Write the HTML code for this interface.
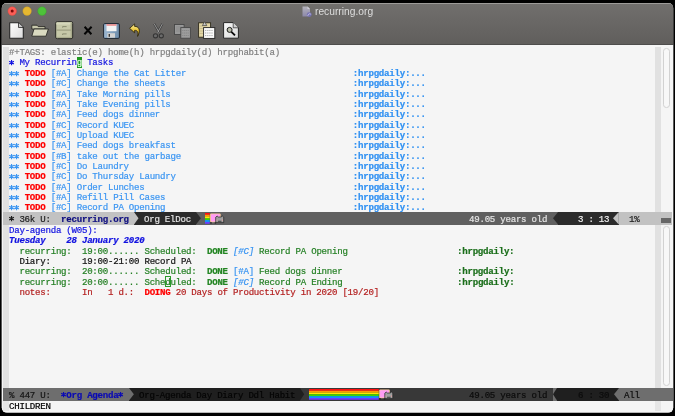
<!DOCTYPE html>
<html><head><meta charset="utf-8">
<style>
html,body{margin:0;padding:0;}
body{width:675px;height:416px;background:#000;position:relative;overflow:hidden;font-family:"Liberation Mono",monospace;}
.win{position:absolute;left:0;top:0;width:675px;height:416px;clip-path:inset(3px 1.8px 3.4px 1.8px round 5px);background:#f5f5f5;}
.tb{position:absolute;left:0;top:3px;width:675px;height:42px;background:linear-gradient(#716f6d,#605e5c);}
.tbhl{position:absolute;left:0;top:3px;width:675px;height:1px;background:#9d9b99;}
.tbln{position:absolute;left:0;top:44.2px;width:675px;height:1px;background:#4e4d4c;}
.tl{position:absolute;top:6.7px;width:8.8px;height:8.8px;border-radius:50%;box-sizing:border-box;}
.title{position:absolute;will-change:transform;top:4.6px;left:314.6px;font-family:"Liberation Sans",sans-serif;font-size:10.25px;line-height:13px;color:#dedede;}
.ic{position:absolute;overflow:visible;}
.L{position:absolute;white-space:pre;will-change:transform;font-size:9.100px;letter-spacing:-0.248px;-webkit-text-stroke-width:0.2px;line-height:10.35px;height:10.35px;}
.fr{position:absolute;background:#e1e1e1;}
.ml{position:absolute;height:12.5px;overflow:hidden;}
.mt{position:absolute;white-space:pre;will-change:transform;margin-top:1.6px;font-size:9.100px;letter-spacing:-0.248px;-webkit-text-stroke-width:0.2px;line-height:12.5px;top:0;}
.g{color:#808080}.bl{color:#1212e0}.bli{color:#1212e0;font-weight:bold;font-style:italic}
.lb{color:#3a95f2}.rd{color:#ff0000;font-weight:bold}.tg{color:#2f90f2;font-weight:bold}
.tga{color:#1a6e1a;font-weight:bold}.gr{color:#237f23}.grb{color:#228522;font-weight:bold}.dk{color:#111}.nt{color:#b42222}
.lbi{color:#3a95f2;font-style:italic}.lbb{color:#2f90f2;font-weight:bold}
.astsvg{vertical-align:top;overflow:visible}
.cur{background:#1f9a1f;color:#e8ffe8}
.hc{color:#1e7e1e}
</style></head><body>
<div class="win">
 <div class="tb"></div>
 <div class="tbhl"></div>
 <div class="tbln"></div>
 <svg class="ic" style="left:0;top:0" width="60" height="20" viewBox="0 0 60 20">
  <circle cx="12.2" cy="11.1" r="4.3" fill="#fc5f57" stroke="#e0443c" stroke-width="0.4"/>
  <circle cx="12.2" cy="11.1" r="1.5" fill="#7c0a0a"/>
  <circle cx="27.1" cy="11.1" r="4.3" fill="#e5b731" stroke="#d09e20" stroke-width="0.4"/>
  <circle cx="42.0" cy="11.1" r="4.3" fill="#4ec23a" stroke="#3aa52a" stroke-width="0.4"/>
 </svg>
 <!-- title icon -->
 <svg class="ic" style="left:301.5px;top:5.5px" width="11" height="12" viewBox="0 0 11 12">
  <defs><linearGradient id="gdoc" x1="0" y1="0" x2="0" y2="1"><stop offset="0" stop-color="#b4b2bc"/><stop offset="1" stop-color="#8c88a8"/></linearGradient></defs>
  <path d="M0.5 0.5 H5.5 L8 3 V10.5 H0.5 Z" fill="url(#gdoc)"/>
  <path d="M5.5 0.5 V3 H8" fill="#d0ced8"/>
  <circle cx="7.3" cy="8.6" r="2.4" fill="#7470b0"/>
  <path d="M5.8 9.8 C6.4 7.6 7.8 7.4 8.8 8.2" stroke="#d8d6f0" stroke-width="0.8" fill="none"/>
 </svg>
 <div class="title">recurring.org</div>

 <!-- toolbar icons -->
 <!-- new -->
 <svg class="ic" style="left:9px;top:22px" width="15" height="17" viewBox="0 0 15 17">
  <defs><linearGradient id="gnew" x1="0" y1="0" x2="1" y2="1"><stop offset="0" stop-color="#ffffff"/><stop offset="1" stop-color="#dcdcdc"/></linearGradient></defs>
  <path d="M0.7 0.7 H9.5 L14.3 5.5 V16.3 H0.7 Z" fill="url(#gnew)" stroke="#262626" stroke-width="1.1" stroke-linejoin="round"/>
  <path d="M9.5 0.7 V5.5 H14.3" fill="#c8c8c8" stroke="#262626" stroke-width="0.8"/>
 </svg>
 <!-- open -->
 <svg class="ic" style="left:31px;top:24px" width="18" height="13" viewBox="0 0 18 13">
  <path d="M0.8 1.2 H6 L7.2 2.6 H14 V5 H0.8 Z" fill="#c9c9ad" stroke="#2a2a26" stroke-width="0.9"/>
  <path d="M0.8 12.2 L3 5 H17.4 L15 12.2 Z" fill="#dadac0" stroke="#2a2a26" stroke-width="0.9" stroke-linejoin="round"/>
 </svg>
 <!-- cabinet -->
 <svg class="ic" style="left:55px;top:21px" width="18.5" height="18.5" viewBox="0 0 18.5 18.5">
  <rect x="0.7" y="0.7" width="17" height="17" rx="1.6" fill="#c6c8a8" stroke="#282824" stroke-width="1"/>
  <rect x="1.4" y="1.4" width="15.6" height="2.2" fill="#d6d8bc"/>
  <rect x="15.6" y="1.4" width="1.4" height="15.6" fill="#a8aa8c"/>
  <path d="M1.6 9.1 H15.8" stroke="#8e9074" stroke-width="0.9"/>
  <path d="M1.6 16.4 H15.8" stroke="#9a9c80" stroke-width="0.7"/>
  <path d="M7.6 6.6 V5.6 H11.6 M7.6 13.9 V12.9 H11.6" fill="none" stroke="#7a7c62" stroke-width="0.8"/>
 </svg>
 <!-- close X -->
 <svg class="ic" style="left:82.5px;top:25.6px" width="10" height="9" viewBox="0 0 10 9">
  <path d="M1.6 0.8 L8.4 8.2 M8.6 0.8 L1.4 8.2" stroke="#050505" stroke-width="2" stroke-linecap="butt"/>
 </svg>
 <!-- save -->
 <svg class="ic" style="left:103px;top:22.7px" width="17" height="16" viewBox="0 0 17 16">
  <defs><linearGradient id="gsave" x1="0" y1="0" x2="1" y2="0"><stop offset="0" stop-color="#9db8d2"/><stop offset="1" stop-color="#6d8cab"/></linearGradient></defs>
  <rect x="0.6" y="0.6" width="15.8" height="14.8" rx="1.2" fill="url(#gsave)" stroke="#1e2530" stroke-width="1"/>
  <rect x="3.5" y="1.2" width="10" height="7" fill="#f4f4f4"/>
  <rect x="3.5" y="1.2" width="10" height="1.5" fill="#e88080"/>
  <rect x="4.3" y="10.2" width="7.7" height="4.5" fill="#d4d4d4"/>
  <rect x="5.6" y="11" width="1.4" height="2.8" fill="#3a3a3a"/>
 </svg>
 <!-- undo -->
 <svg class="ic" style="left:128px;top:22px" width="14" height="16" viewBox="0 0 14 16">
  <defs><linearGradient id="gundo" x1="0" y1="0" x2="0" y2="1"><stop offset="0" stop-color="#fbeea0"/><stop offset="0.55" stop-color="#e6c030"/><stop offset="1" stop-color="#c09418"/></linearGradient></defs>
  <path d="M1.6 6.3 L6.6 1.9 V4.4 C10.6 4.2 13.2 7.6 9.6 14.4 C10.4 9.6 9.4 8.2 6.6 8.4 V10.8 Z" fill="url(#gundo)" stroke="#2a2208" stroke-width="0.8" stroke-linejoin="round"/>
 </svg>
 <!-- cut (disabled) -->
 <svg class="ic" style="left:152px;top:22.5px" width="13" height="16" viewBox="0 0 13 16">
  <path d="M2.2 0.8 L7.2 9.6 M10.4 0.8 L5.6 9.6" stroke="#3c3c3c" stroke-width="2.2"/>
  <path d="M2.2 0.8 L7.2 9.6 M10.4 0.8 L5.6 9.6" stroke="#a0a0a0" stroke-width="0.9"/>
  <circle cx="3.5" cy="12.8" r="2.1" fill="#6a6a6a" stroke="#353535" stroke-width="1.1"/>
  <circle cx="9.3" cy="12.8" r="2.1" fill="#6a6a6a" stroke="#353535" stroke-width="1.1"/>
 </svg>
 <!-- copy (disabled) -->
 <svg class="ic" style="left:174px;top:23.8px" width="17" height="15" viewBox="0 0 17 15">
  <rect x="0.5" y="0.5" width="9.6" height="10" fill="#999999" stroke="#474747" stroke-width="0.9"/>
  <path d="M2 3 H9 M2 5 H9 M2 7 H9" stroke="#858585" stroke-width="0.6"/>
  <rect x="6.8" y="3.6" width="9.6" height="10.6" fill="#9d9d9d" stroke="#474747" stroke-width="0.9"/>
  <path d="M8.2 6.5 H15 M8.2 9 H15 M8.2 11.5 H15" stroke="#808080" stroke-width="0.7" stroke-dasharray="1.2 0.6"/>
 </svg>
 <!-- paste -->
 <svg class="ic" style="left:198px;top:21px" width="17.5" height="18" viewBox="0 0 17.5 18">
  <rect x="0.6" y="1.8" width="12" height="14.4" fill="#e2d6a6" stroke="#2e2a1a" stroke-width="0.9"/>
  <path d="M1.6 5 H5 M1.6 7.5 H5 M1.6 10 H5 M1.6 12.5 H5" stroke="#b8ac7c" stroke-width="0.6"/>
  <path d="M4.4 4.6 L6.6 0.6 L8.8 4.6 Z" fill="#c8c8c8" stroke="#3a3a3a" stroke-width="0.7"/>
  <rect x="5.6" y="6.6" width="11.2" height="10.8" fill="#fbfbfb" stroke="#222" stroke-width="0.9"/>
  <path d="M7 9.4 H15.4 M7 12 H15.4 M7 14.6 H15.4" stroke="#7a7a7a" stroke-width="0.6" stroke-dasharray="1.4 0.7"/>
 </svg>
 <!-- search -->
 <svg class="ic" style="left:222.8px;top:22px" width="16" height="17" viewBox="0 0 16 17">
  <defs><linearGradient id="gsr" x1="0" y1="0" x2="1" y2="1"><stop offset="0" stop-color="#fafafa"/><stop offset="1" stop-color="#dadada"/></linearGradient></defs>
  <path d="M0.6 0.6 H10.2 L15.4 5.8 V16.2 H0.6 Z" fill="url(#gsr)" stroke="#262626" stroke-width="1" stroke-linejoin="round"/>
  <path d="M10.2 0.6 V5.8 H15.4" fill="#cfcfcf" stroke="#262626" stroke-width="0.7"/>
  <circle cx="6.6" cy="7.9" r="2.5" fill="#b9bcaa" stroke="#1a1a1a" stroke-width="1"/>
  <path d="M8.4 9.8 L12 13.4" stroke="#0a0a0a" stroke-width="1.8"/>
 </svg>

 <!-- content internal area -->
 <div style="position:absolute;left:0;top:45px;width:675px;height:371px;background:#f5f5f5"></div>

 <!-- fringes top window -->
 <div class="fr" style="left:3.1px;top:47px;width:6px;height:165.3px"></div>
 <div class="fr" style="left:654.6px;top:47px;width:6px;height:165.3px"></div>
 <!-- scrollbar top -->
 <div style="position:absolute;left:663px;top:47.8px;width:6.6px;height:60.5px;border:0.8px solid #d2d2d2;border-radius:3.3px;box-sizing:border-box;background:#f8f8f8"></div>

<div class="L" style="top:48.10px;left:9.10px"><span class="g">#+TAGS: elastic(e) home(h) hrpgdaily(d) hrpghabit(a)</span></div>
<div class="L" style="top:58.45px;left:9.10px"><svg class="astsvg bl" width="5.212" height="10" viewBox="0 0 5.2 10"><path d="M2.55 1.9 V7.3 M0.2 3.25 L4.9 5.95 M0.2 5.95 L4.9 3.25" stroke="currentColor" stroke-width="1.15"/></svg><span class="bl"> My Recurrin</span><span class="cur">g</span><span class="bl"> Tasks</span></div>
<div class="L" style="top:68.80px;left:9.10px"><svg class="astsvg lb" width="5.212" height="10" viewBox="0 0 5.2 10"><path d="M2.55 1.9 V7.3 M0.2 3.25 L4.9 5.95 M0.2 5.95 L4.9 3.25" stroke="currentColor" stroke-width="1.15"/></svg><svg class="astsvg lb" width="5.212" height="10" viewBox="0 0 5.2 10"><path d="M2.55 1.9 V7.3 M0.2 3.25 L4.9 5.95 M0.2 5.95 L4.9 3.25" stroke="currentColor" stroke-width="1.15"/></svg> <span class="rd">TODO</span> <span class="lb">[#A] Change the Cat Litter                                </span><span class="tg">:hrpgdaily:...</span></div>
<div class="L" style="top:79.15px;left:9.10px"><svg class="astsvg lb" width="5.212" height="10" viewBox="0 0 5.2 10"><path d="M2.55 1.9 V7.3 M0.2 3.25 L4.9 5.95 M0.2 5.95 L4.9 3.25" stroke="currentColor" stroke-width="1.15"/></svg><svg class="astsvg lb" width="5.212" height="10" viewBox="0 0 5.2 10"><path d="M2.55 1.9 V7.3 M0.2 3.25 L4.9 5.95 M0.2 5.95 L4.9 3.25" stroke="currentColor" stroke-width="1.15"/></svg> <span class="rd">TODO</span> <span class="lb">[#C] Change the sheets                                    </span><span class="tg">:hrpgdaily:...</span></div>
<div class="L" style="top:89.50px;left:9.10px"><svg class="astsvg lb" width="5.212" height="10" viewBox="0 0 5.2 10"><path d="M2.55 1.9 V7.3 M0.2 3.25 L4.9 5.95 M0.2 5.95 L4.9 3.25" stroke="currentColor" stroke-width="1.15"/></svg><svg class="astsvg lb" width="5.212" height="10" viewBox="0 0 5.2 10"><path d="M2.55 1.9 V7.3 M0.2 3.25 L4.9 5.95 M0.2 5.95 L4.9 3.25" stroke="currentColor" stroke-width="1.15"/></svg> <span class="rd">TODO</span> <span class="lb">[#A] Take Morning pills                                   </span><span class="tg">:hrpgdaily:...</span></div>
<div class="L" style="top:99.85px;left:9.10px"><svg class="astsvg lb" width="5.212" height="10" viewBox="0 0 5.2 10"><path d="M2.55 1.9 V7.3 M0.2 3.25 L4.9 5.95 M0.2 5.95 L4.9 3.25" stroke="currentColor" stroke-width="1.15"/></svg><svg class="astsvg lb" width="5.212" height="10" viewBox="0 0 5.2 10"><path d="M2.55 1.9 V7.3 M0.2 3.25 L4.9 5.95 M0.2 5.95 L4.9 3.25" stroke="currentColor" stroke-width="1.15"/></svg> <span class="rd">TODO</span> <span class="lb">[#A] Take Evening pills                                   </span><span class="tg">:hrpgdaily:...</span></div>
<div class="L" style="top:110.20px;left:9.10px"><svg class="astsvg lb" width="5.212" height="10" viewBox="0 0 5.2 10"><path d="M2.55 1.9 V7.3 M0.2 3.25 L4.9 5.95 M0.2 5.95 L4.9 3.25" stroke="currentColor" stroke-width="1.15"/></svg><svg class="astsvg lb" width="5.212" height="10" viewBox="0 0 5.2 10"><path d="M2.55 1.9 V7.3 M0.2 3.25 L4.9 5.95 M0.2 5.95 L4.9 3.25" stroke="currentColor" stroke-width="1.15"/></svg> <span class="rd">TODO</span> <span class="lb">[#A] Feed dogs dinner                                     </span><span class="tg">:hrpgdaily:...</span></div>
<div class="L" style="top:120.55px;left:9.10px"><svg class="astsvg lb" width="5.212" height="10" viewBox="0 0 5.2 10"><path d="M2.55 1.9 V7.3 M0.2 3.25 L4.9 5.95 M0.2 5.95 L4.9 3.25" stroke="currentColor" stroke-width="1.15"/></svg><svg class="astsvg lb" width="5.212" height="10" viewBox="0 0 5.2 10"><path d="M2.55 1.9 V7.3 M0.2 3.25 L4.9 5.95 M0.2 5.95 L4.9 3.25" stroke="currentColor" stroke-width="1.15"/></svg> <span class="rd">TODO</span> <span class="lb">[#C] Record KUEC                                          </span><span class="tg">:hrpgdaily:...</span></div>
<div class="L" style="top:130.90px;left:9.10px"><svg class="astsvg lb" width="5.212" height="10" viewBox="0 0 5.2 10"><path d="M2.55 1.9 V7.3 M0.2 3.25 L4.9 5.95 M0.2 5.95 L4.9 3.25" stroke="currentColor" stroke-width="1.15"/></svg><svg class="astsvg lb" width="5.212" height="10" viewBox="0 0 5.2 10"><path d="M2.55 1.9 V7.3 M0.2 3.25 L4.9 5.95 M0.2 5.95 L4.9 3.25" stroke="currentColor" stroke-width="1.15"/></svg> <span class="rd">TODO</span> <span class="lb">[#C] Upload KUEC                                          </span><span class="tg">:hrpgdaily:...</span></div>
<div class="L" style="top:141.25px;left:9.10px"><svg class="astsvg lb" width="5.212" height="10" viewBox="0 0 5.2 10"><path d="M2.55 1.9 V7.3 M0.2 3.25 L4.9 5.95 M0.2 5.95 L4.9 3.25" stroke="currentColor" stroke-width="1.15"/></svg><svg class="astsvg lb" width="5.212" height="10" viewBox="0 0 5.2 10"><path d="M2.55 1.9 V7.3 M0.2 3.25 L4.9 5.95 M0.2 5.95 L4.9 3.25" stroke="currentColor" stroke-width="1.15"/></svg> <span class="rd">TODO</span> <span class="lb">[#A] Feed dogs breakfast                                  </span><span class="tg">:hrpgdaily:...</span></div>
<div class="L" style="top:151.60px;left:9.10px"><svg class="astsvg lb" width="5.212" height="10" viewBox="0 0 5.2 10"><path d="M2.55 1.9 V7.3 M0.2 3.25 L4.9 5.95 M0.2 5.95 L4.9 3.25" stroke="currentColor" stroke-width="1.15"/></svg><svg class="astsvg lb" width="5.212" height="10" viewBox="0 0 5.2 10"><path d="M2.55 1.9 V7.3 M0.2 3.25 L4.9 5.95 M0.2 5.95 L4.9 3.25" stroke="currentColor" stroke-width="1.15"/></svg> <span class="rd">TODO</span> <span class="lb">[#B] take out the garbage                                 </span><span class="tg">:hrpgdaily:...</span></div>
<div class="L" style="top:161.95px;left:9.10px"><svg class="astsvg lb" width="5.212" height="10" viewBox="0 0 5.2 10"><path d="M2.55 1.9 V7.3 M0.2 3.25 L4.9 5.95 M0.2 5.95 L4.9 3.25" stroke="currentColor" stroke-width="1.15"/></svg><svg class="astsvg lb" width="5.212" height="10" viewBox="0 0 5.2 10"><path d="M2.55 1.9 V7.3 M0.2 3.25 L4.9 5.95 M0.2 5.95 L4.9 3.25" stroke="currentColor" stroke-width="1.15"/></svg> <span class="rd">TODO</span> <span class="lb">[#C] Do Laundry                                           </span><span class="tg">:hrpgdaily:...</span></div>
<div class="L" style="top:172.30px;left:9.10px"><svg class="astsvg lb" width="5.212" height="10" viewBox="0 0 5.2 10"><path d="M2.55 1.9 V7.3 M0.2 3.25 L4.9 5.95 M0.2 5.95 L4.9 3.25" stroke="currentColor" stroke-width="1.15"/></svg><svg class="astsvg lb" width="5.212" height="10" viewBox="0 0 5.2 10"><path d="M2.55 1.9 V7.3 M0.2 3.25 L4.9 5.95 M0.2 5.95 L4.9 3.25" stroke="currentColor" stroke-width="1.15"/></svg> <span class="rd">TODO</span> <span class="lb">[#C] Do Thursday Laundry                                  </span><span class="tg">:hrpgdaily:...</span></div>
<div class="L" style="top:182.65px;left:9.10px"><svg class="astsvg lb" width="5.212" height="10" viewBox="0 0 5.2 10"><path d="M2.55 1.9 V7.3 M0.2 3.25 L4.9 5.95 M0.2 5.95 L4.9 3.25" stroke="currentColor" stroke-width="1.15"/></svg><svg class="astsvg lb" width="5.212" height="10" viewBox="0 0 5.2 10"><path d="M2.55 1.9 V7.3 M0.2 3.25 L4.9 5.95 M0.2 5.95 L4.9 3.25" stroke="currentColor" stroke-width="1.15"/></svg> <span class="rd">TODO</span> <span class="lb">[#A] Order Lunches                                        </span><span class="tg">:hrpgdaily:...</span></div>
<div class="L" style="top:193.00px;left:9.10px"><svg class="astsvg lb" width="5.212" height="10" viewBox="0 0 5.2 10"><path d="M2.55 1.9 V7.3 M0.2 3.25 L4.9 5.95 M0.2 5.95 L4.9 3.25" stroke="currentColor" stroke-width="1.15"/></svg><svg class="astsvg lb" width="5.212" height="10" viewBox="0 0 5.2 10"><path d="M2.55 1.9 V7.3 M0.2 3.25 L4.9 5.95 M0.2 5.95 L4.9 3.25" stroke="currentColor" stroke-width="1.15"/></svg> <span class="rd">TODO</span> <span class="lb">[#A] Refill Pill Cases                                    </span><span class="tg">:hrpgdaily:...</span></div>
<div class="L" style="top:203.35px;left:9.10px"><svg class="astsvg lb" width="5.212" height="10" viewBox="0 0 5.2 10"><path d="M2.55 1.9 V7.3 M0.2 3.25 L4.9 5.95 M0.2 5.95 L4.9 3.25" stroke="currentColor" stroke-width="1.15"/></svg><svg class="astsvg lb" width="5.212" height="10" viewBox="0 0 5.2 10"><path d="M2.55 1.9 V7.3 M0.2 3.25 L4.9 5.95 M0.2 5.95 L4.9 3.25" stroke="currentColor" stroke-width="1.15"/></svg> <span class="rd">TODO</span> <span class="lb">[#C] Record PA Opening                                    </span><span class="tg">:hrpgdaily:...</span></div>

 <!-- top mode line -->
 <div class="ml" style="left:3px;top:212.2px;width:468.7px;background:#606060;"></div>
 <div class="ml" style="left:3px;top:212.2px;width:131.5px;background:#c2c2c2;"></div>
 <svg class="ic" style="left:134.3px;top:212.2px" width="5" height="12.5" viewBox="0 0 5 12.5"><path d="M0 0 L4.5 6.25 L0 12.5 Z" fill="#c2c2c2"/></svg>
 <div class="ml" style="left:134.3px;top:212.2px;width:61.6px;background:#2b2b2b;"></div>
 <svg class="ic" style="left:134.3px;top:212.2px" width="5" height="12.5" viewBox="0 0 5 12.5"><path d="M0 0 L4.5 6.25 L0 12.5 Z" fill="#c2c2c2"/></svg>
 <svg class="ic" style="left:195.9px;top:212.2px" width="5" height="12.5" viewBox="0 0 5 12.5"><path d="M0 0 L4.9 6.25 L0 12.5 Z" fill="#2b2b2b"/></svg>
 <div class="ml" style="left:471.5px;top:212.2px;width:200px;background:#606060;"></div>
 <div class="ml" style="left:557.6px;top:212.2px;width:61.5px;background:#2b2b2b;"></div>
 <svg class="ic" style="left:552.6px;top:212.2px" width="5.1" height="12.5" viewBox="0 0 5.1 12.5"><path d="M5.1 0 L0 6.25 L5.1 12.5 Z" fill="#2b2b2b"/></svg>
 <div class="ml" style="left:619.1px;top:212.2px;width:52.6px;background:#c2c2c2;"></div>
 <svg class="ic" style="left:613.4px;top:212.2px" width="5.8" height="12.5" viewBox="0 0 5.8 12.5"><path d="M5.8 0 L0 6.25 L5.8 12.5 Z" fill="#c2c2c2"/></svg>
 <div style="position:absolute;left:660.8px;top:218.2px;width:10.2px;height:5.2px;background:#676767"></div>
 <div class="mt" style="left:9.1px;top:212.2px;color:#1c1c1c"><svg class="astsvg" width="5.212" height="10" viewBox="0 0 5.2 10"><path d="M2.55 1.9 V7.3 M0.2 3.25 L4.9 5.95 M0.2 5.95 L4.9 3.25" stroke="currentColor" stroke-width="1.15"/></svg> 36k U:  <b style="color:#101080">recurring.org</b></div>
 <div class="mt" style="left:143.5px;top:212.2px;color:#e4e4e4">Org ElDoc</div>
 <div class="mt" style="left:469px;top:212.2px;color:#e4e4e4">49.05 years old</div>
 <div class="mt" style="left:578.3px;top:212.2px;color:#f0f0f0">3 : 13</div>
 <div class="mt" style="left:629px;top:212.2px;color:#1c1c1c">1%</div>
 <svg class="ic" style="left:205.1px;top:213.0px" width="19.30" height="11" viewBox="0 0 19.30 11"><rect x="0" y="0.00" width="4.70" height="1.83" fill="#ff1010"/><rect x="0" y="1.78" width="4.70" height="1.83" fill="#ff9a00"/><rect x="0" y="3.57" width="4.70" height="1.83" fill="#ffe600"/><rect x="0" y="5.35" width="4.70" height="1.83" fill="#38d800"/><rect x="0" y="7.13" width="4.70" height="1.83" fill="#0a9cff"/><rect x="0" y="8.92" width="4.70" height="1.83" fill="#6a3cff"/><rect x="5.10" y="0.5" width="10.6" height="8.8" rx="1" fill="#ffc89a"/><rect x="6.00" y="1.3" width="8.8" height="7.2" rx="0.6" fill="#ff9cf4"/><path d="M10.70 4.2 L12.10 3.0 L13.30 4.0 H16.10 L17.30 3.0 L18.70 4.2 V9.6 H10.70 Z" fill="#9e9e9e" stroke="#222" stroke-width="0.7"/><rect x="12.90" y="7.8" width="3.6" height="0.9" fill="#333"/><rect x="11.50" y="6.6" width="1" height="1" fill="#f6a0a0"/><rect x="16.90" y="6.6" width="1" height="1" fill="#f6a0a0"/><rect x="5.30" y="9.2" width="1.4" height="1.4" fill="#222"/><rect x="9.70" y="9.4" width="1.4" height="1.2" fill="#222"/></svg>

 <!-- fringes bottom window -->
 <div class="fr" style="left:3.1px;top:224.7px;width:6px;height:163.3px"></div>
 <div class="fr" style="left:654.6px;top:224.7px;width:6px;height:163.3px"></div>
 <div style="position:absolute;left:663px;top:226.2px;width:6.6px;height:159.5px;border:0.8px solid #d2d2d2;border-radius:3.3px;box-sizing:border-box;background:#f8f8f8"></div>

<div class="L" style="top:225.80px;left:9.10px"><span class="bl">Day-agenda (W05):</span></div>
<div class="L" style="top:236.15px;left:9.10px"><span class="bli">Tuesday    28 January 2020</span></div>
<div class="L" style="top:246.50px;left:9.10px"><span class="gr">  recurring:  19:00...... Scheduled:  </span><span class="grb">DONE</span> <span class="lbi">[#C]</span> <span class="gr">Record PA Opening                     </span><span class="tga">:hrpgdaily:</span></div>
<div class="L" style="top:256.85px;left:9.10px"><span class="dk">  Diary:      19:00-21:00 Record PA</span></div>
<div class="L" style="top:267.20px;left:9.10px"><span class="gr">  recurring:  20:00...... Scheduled:  </span><span class="grb">DONE</span> <span class="lb">[#A]</span> <span class="gr">Feed dogs dinner                      </span><span class="tga">:hrpgdaily:</span></div>
<div class="L" style="top:277.55px;left:9.10px"><span class="gr">  recurring:  20:00...... Sche</span><span class="hc">d</span><span class="gr">uled:  </span><span class="grb">DONE</span> <span class="lbi">[#C]</span> <span class="gr">Record PA Ending                      </span><span class="tga">:hrpgdaily:</span></div>
<div class="L" style="top:287.90px;left:9.10px"><span class="nt">  notes:      In   1 d.:  </span><span class="rd">DOING</span><span class="nt"> 20 Days of Productivity in 2020 [19/20]</span></div>

 <!-- bottom mode line (inactive) -->
 <div class="ml" style="left:3px;top:388.1px;width:669.5px;background:#6e6e6e;"></div>
 <div class="ml" style="left:128.8px;top:388.1px;width:171.5px;background:#1f1f1f;"></div>
 <svg class="ic" style="left:128.8px;top:388.1px" width="5" height="12.5" viewBox="0 0 5 12.5"><path d="M0 0 L4.9 6.25 L0 12.5 Z" fill="#6e6e6e"/></svg>
 <div class="ml" style="left:300.3px;top:388.1px;width:252.7px;background:#383838;"></div>
 <svg class="ic" style="left:300.3px;top:388.1px" width="5" height="12.5" viewBox="0 0 5 12.5"><path d="M0 0 L4.2 6.25 L0 12.5 Z" fill="#1f1f1f"/></svg>
 <div class="ml" style="left:557px;top:388.1px;width:62px;background:#1f1f1f;"></div>
 <svg class="ic" style="left:553px;top:388.1px" width="4" height="12.5" viewBox="0 0 4 12.5"><path d="M4 0 L0 6.25 L4 12.5 Z" fill="#1f1f1f"/></svg>
 <svg class="ic" style="left:614px;top:388.1px" width="5" height="12.5" viewBox="0 0 5 12.5"><path d="M5 0 L0 6.25 L5 12.5 Z" fill="#6e6e6e"/></svg>
 <div class="ml" style="left:619px;top:388.1px;width:53.5px;background:#6e6e6e;"></div>
 <div class="mt" style="left:9.1px;top:388.1px;color:#161616">% 447 U:  <b style="color:#0a0ab4"><svg class="astsvg" width="5.212" height="10" viewBox="0 0 5.2 10"><path d="M2.55 1.9 V7.3 M0.2 3.25 L4.9 5.95 M0.2 5.95 L4.9 3.25" stroke="currentColor" stroke-width="1.15"/></svg>Org Agenda<svg class="astsvg" width="5.212" height="10" viewBox="0 0 5.2 10"><path d="M2.55 1.9 V7.3 M0.2 3.25 L4.9 5.95 M0.2 5.95 L4.9 3.25" stroke="currentColor" stroke-width="1.15"/></svg></b></div>
 <div class="mt" style="left:138.5px;top:388.1px;color:#050505">Org-Agenda Day Diary Ddl Habit</div>
 <div class="mt" style="left:469px;top:388.1px;color:#0c0c0c">49.05 years old</div>
 <div class="mt" style="left:578.3px;top:388.1px;color:#0c0c0c">6 : 30</div>
 <div class="mt" style="left:624px;top:388.1px;color:#0c0c0c">All</div>
 <svg class="ic" style="left:309.4px;top:389.1px" width="84.40" height="11" viewBox="0 0 84.40 11"><rect x="0" y="0.00" width="69.80" height="1.83" fill="#ff1010"/><rect x="0" y="1.78" width="69.80" height="1.83" fill="#ff9a00"/><rect x="0" y="3.57" width="69.80" height="1.83" fill="#ffe600"/><rect x="0" y="5.35" width="69.80" height="1.83" fill="#38d800"/><rect x="0" y="7.13" width="69.80" height="1.83" fill="#0a9cff"/><rect x="0" y="8.92" width="69.80" height="1.83" fill="#6a3cff"/><rect x="70.20" y="0.5" width="10.6" height="8.8" rx="1" fill="#ffc89a"/><rect x="71.10" y="1.3" width="8.8" height="7.2" rx="0.6" fill="#ff9cf4"/><path d="M75.80 4.2 L77.20 3.0 L78.40 4.0 H81.20 L82.40 3.0 L83.80 4.2 V9.6 H75.80 Z" fill="#9e9e9e" stroke="#222" stroke-width="0.7"/><rect x="78.00" y="7.8" width="3.6" height="0.9" fill="#333"/><rect x="76.60" y="6.6" width="1" height="1" fill="#f6a0a0"/><rect x="82.00" y="6.6" width="1" height="1" fill="#f6a0a0"/><rect x="70.40" y="9.2" width="1.4" height="1.4" fill="#222"/><rect x="74.80" y="9.4" width="1.4" height="1.2" fill="#222"/></svg>

 <div style="position:absolute;left:165.2px;top:276.4px;width:5.8px;height:10.3px;border:0.9px solid #2a9a2a;box-sizing:border-box"></div>
 <!-- minibuffer -->
 <div class="fr" style="left:3.1px;top:400.6px;width:6px;height:10px;background:#e6e6e6"></div>
 <div class="fr" style="left:654.6px;top:400.6px;width:6px;height:10px;background:#e6e6e6"></div>
 <div class="L" style="left:9.1px;top:402px;color:#000;-webkit-text-stroke-width:0.22px">CHILDREN</div>
</div>
</body></html>
